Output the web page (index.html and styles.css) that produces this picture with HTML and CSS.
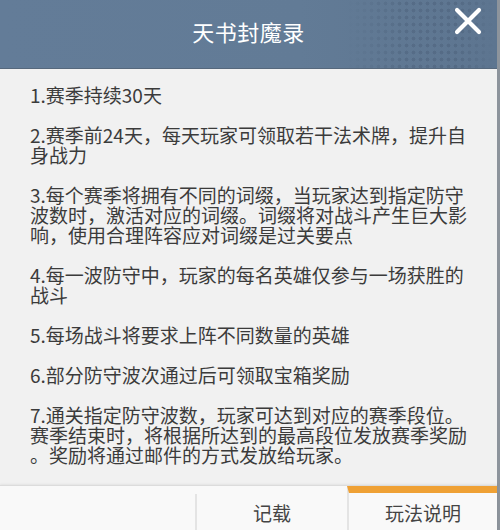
FILE: index.html
```html
<!DOCTYPE html>
<html lang="zh-CN">
<head>
<meta charset="utf-8">
<title>天书封魔录</title>
<link rel="stylesheet" href="styles.css">
</head>
<body>
<div class="panel">
  <header class="header">
    <div class="dots"></div>
    <h1 class="title">天书封魔录</h1>
    <button class="close" aria-label="关闭">
      <svg width="28" height="28" viewBox="0 0 28 28"><path d="M3 3 L25 25 M25 3 L3 25" stroke="#fff" stroke-width="4.2" stroke-linecap="round" fill="none"/></svg>
    </button>
  </header>
  <main class="content">
    <p>1.赛季持续30天</p>
    <p>2.赛季前24天，每天玩家可领取若干法术牌，提升自<br>身战力</p>
    <p>3.每个赛季将拥有不同的词缀，当玩家达到指定防守<br>波数时，激活对应的词缀。词缀将对战斗产生巨大影<br>响，使用合理阵容应对词缀是过关要点</p>
    <p>4.每一波防守中，玩家的每名英雄仅参与一场获胜的<br>战斗</p>
    <p>5.每场战斗将要求上阵不同数量的英雄</p>
    <p>6.部分防守波次通过后可领取宝箱奖励</p>
    <p>7.通关指定防守波数，玩家可达到对应的赛季段位。<br>赛季结束时，将根据所达到的最高段位发放赛季奖励<br>。奖励将通过邮件的方式发放给玩家。</p>
  </main>
  <footer class="tabs">
    <div class="tab tab-empty"></div>
    <div class="tab">记载</div>
    <div class="tab active">玩法说明</div>
  </footer>
</div>
</body>
</html>
```

FILE: styles.css
```css
* { box-sizing: border-box; }
html, body { margin: 0; padding: 0; }
body {
  width: 500px;
  height: 530px;
  overflow: hidden;
  background: #f1f1f1;
  font-family: "Noto Sans CJK SC", "Noto Sans", sans-serif;
}
.panel {
  width: 500px;
  height: 530px;
  display: flex;
  flex-direction: column;
  border-right: 3px solid #8d949c;
  background: #f1f1f1;
}
.header {
  position: relative;
  height: 69px;
  flex: none;
  background: linear-gradient(90deg, #637c98 0%, #627b96 60%, #5d7590 100%);
  border-bottom: 1px solid #56687c;
  display: flex;
  align-items: center;
  justify-content: center;
}
.dots {
  position: absolute;
  right: 0;
  top: 0;
  width: 150px;
  height: 68px;
  background-image: radial-gradient(circle, rgba(70, 90, 115, 0.55) 1.6px, transparent 2.2px);
  background-size: 7px 7px;
  -webkit-mask-image: linear-gradient(90deg, transparent 0%, #000 40%, #000 75%, transparent 100%);
  mask-image: linear-gradient(90deg, transparent 0%, #000 40%, #000 75%, transparent 100%);
  opacity: 0.7;
}
.title {
  margin: 0 0 6px 0;
  font-size: 22px;
  font-weight: 400;
  color: #ffffff;
  letter-spacing: 0.5px;
  position: relative;
}
.close {
  position: absolute;
  right: 14px;
  top: 6px;
  width: 30px;
  height: 30px;
  padding: 0;
  border: 0;
  background: none;
  display: flex;
  align-items: center;
  justify-content: center;
}
.content {
  flex: 1;
  padding: 16px 0 0 30px;
  color: #3b3b3b;
  font-size: 19px;
  line-height: 20px;
}
.content p {
  margin: 0 0 20px 0;
  white-space: nowrap;
}
.tabs {
  flex: none;
  height: 48px;
  display: flex;
  padding-top: 8px;
  background: #f9f9f9;
  border-top: 1px solid #dcdcdc;
  box-shadow: 0 -1px 2px rgba(0,0,0,0.06);
}
.tab {
  display: flex;
  align-items: center;
  justify-content: center;
  font-size: 19px;
  color: #444;
  padding-bottom: 2px;
  width: 152px;
  border-left: 2px solid #e4e4e4;
}
.tab-empty {
  width: 195px;
  border-left: 0;
}
.tab.active {
  flex: 1;
  margin-top: -8px;
  border-top: 7px solid #efa135;
  padding-top: 1px;
}
```
